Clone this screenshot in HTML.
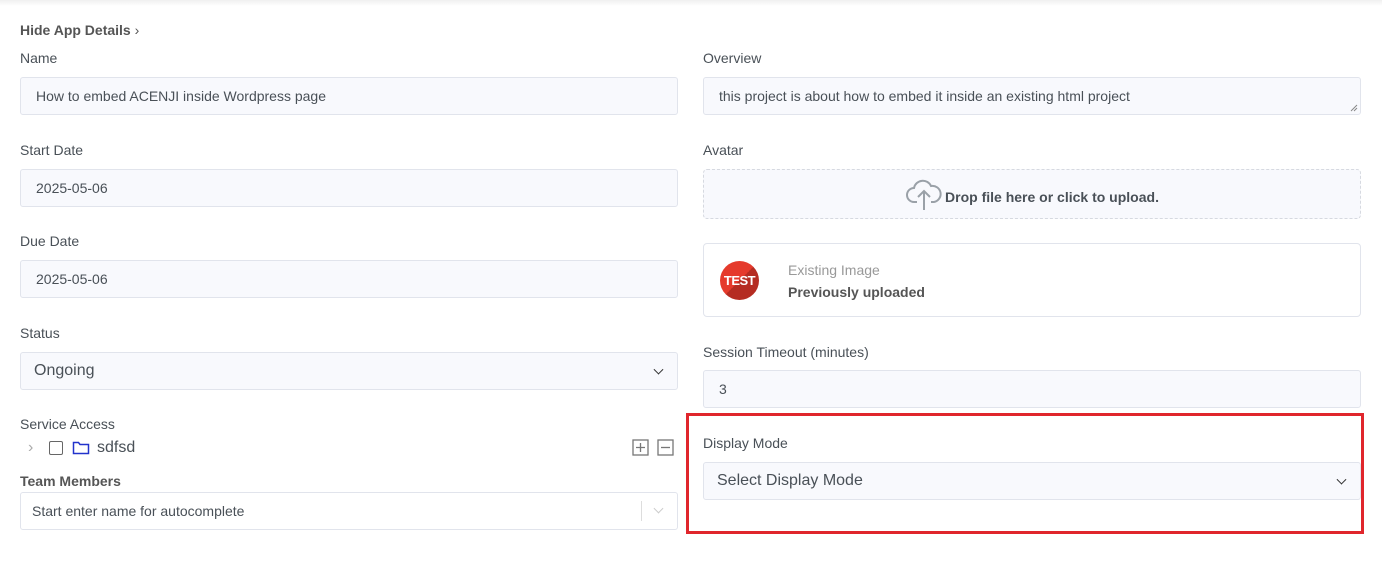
<!DOCTYPE html>
<html><head><style>
*{box-sizing:border-box;margin:0;padding:0}
body{width:1382px;height:562px;background:#fff;font-family:"Liberation Sans",sans-serif;color:#495057;position:relative;overflow:hidden}
.a{position:absolute}
.lbl{font-size:14px;color:#495057;line-height:16px}
.inp{background:#f8f9fd;border:1px solid #e1e4ec;border-radius:3px;font-size:14px;color:#495057;padding-left:15px;display:flex;align-items:center}
.sel{font-size:16px;padding-left:13px}
.chev{position:absolute;right:15px;top:50%;width:7px;height:7px;border-right:1.6px solid #333;border-bottom:1.6px solid #333;transform:translateY(-70%) rotate(45deg)}
</style></head><body>
<div class="a" style="left:0;top:0;width:1382px;height:6px;background:linear-gradient(#f0f0f0,#fff)"></div>
<div class="a lbl" style="left:20px;top:22px;font-weight:bold;color:#555">Hide App Details <span style="font-weight:normal">›</span></div>

<div class="a lbl" style="left:20px;top:50px">Name</div>
<div class="a inp" style="left:20px;top:77px;width:658px;height:38px">How to embed ACENJI inside Wordpress page</div>
<div class="a lbl" style="left:20px;top:142px">Start Date</div>
<div class="a inp" style="left:20px;top:169px;width:658px;height:38px">2025-05-06</div>
<div class="a lbl" style="left:20px;top:233px">Due Date</div>
<div class="a inp" style="left:20px;top:260px;width:658px;height:38px">2025-05-06</div>
<div class="a lbl" style="left:20px;top:325px">Status</div>
<div class="a inp sel" style="left:20px;top:352px;width:658px;height:38px">Ongoing<span class="chev"></span></div>
<div class="a lbl" style="left:20px;top:416px">Service Access</div>
<div class="a" style="left:28px;top:439px;font-size:16px;color:#aaa">›</div>
<div class="a" style="left:49px;top:441px;width:14px;height:14px;border:1.5px solid #666;border-radius:2px"></div>
<svg class="a" style="left:72px;top:440px" width="18" height="16" viewBox="0 0 18 16"><path d="M1.5 2.5h5l1.5 2h8.5v9h-15z" fill="none" stroke="#2233cc" stroke-width="1.5"/></svg>
<div class="a" style="left:97px;top:439px;font-size:16px;color:#495057">sdfsd</div>
<svg class="a" style="left:632px;top:439px" width="44" height="17" viewBox="0 0 44 17"><rect x="1" y="1" width="15" height="15" fill="none" stroke="#777" stroke-width="1.3"/><path d="M4 8.5h9M8.5 4v9" stroke="#777" stroke-width="1.3"/><rect x="26" y="1" width="15" height="15" fill="none" stroke="#777" stroke-width="1.3"/><path d="M29 8.5h9" stroke="#777" stroke-width="1.3"/></svg>
<div class="a lbl" style="left:20px;top:473px;font-weight:bold;color:#555">Team Members</div>
<div class="a inp" style="left:20px;top:492px;width:658px;height:38px;background:#fff;padding-left:11px">Start enter name for autocomplete
<span class="a" style="left:620px;top:8px;width:1px;height:20px;background:#ddd"></span>
<span class="a" style="left:634px;top:12px;width:7px;height:7px;border-right:1.3px solid #ccc;border-bottom:1.3px solid #ccc;transform:rotate(45deg)"></span></div>

<div class="a lbl" style="left:703px;top:50px">Overview</div>
<div class="a inp" style="left:703px;top:77px;width:658px;height:38px">this project is about how to embed it inside an existing html project
<svg class="a" style="right:2px;bottom:2px" width="8" height="8" viewBox="0 0 8 8"><path d="M7 1L1 7M7 4L4 7" stroke="#888" stroke-width="1"/></svg></div>
<div class="a lbl" style="left:703px;top:142px">Avatar</div>
<div class="a" style="left:703px;top:169px;width:658px;height:50px;border:1.5px dashed #d6d9e0;border-radius:4px;background:#f8f9fd;display:flex;align-items:center;justify-content:center;font-size:14px;font-weight:bold;color:#495057;padding-top:6px">
<svg width="38" height="34" viewBox="0 0 38 34" style="margin-right:2px;margin-top:-6px"><path d="M12 25H9a7 7 0 0 1 0-14 9 9 0 0 1 17-2 7 7 0 0 1 3 16h-3" fill="none" stroke="#9aa1a8" stroke-width="2"/><path d="M19 33V15M13 20l6-6 6 6" fill="none" stroke="#9aa1a8" stroke-width="2"/></svg>Drop file here or click to upload.</div>
<div class="a" style="left:703px;top:243px;width:658px;height:74px;border:1px solid #e1e4ec;border-radius:4px;background:#fff"></div>
<div class="a" style="left:720px;top:261px;width:39px;height:39px;border-radius:50%;background:linear-gradient(135deg,#e53a2c 50%,#b52c22 50%);color:#fff;font-weight:bold;font-size:13px;display:flex;align-items:center;justify-content:center;letter-spacing:-0.5px">TEST</div>
<div class="a" style="left:788px;top:262px;font-size:14px;color:#999">Existing Image</div>
<div class="a" style="left:788px;top:284px;font-size:14px;font-weight:bold;color:#555">Previously uploaded</div>
<div class="a lbl" style="left:703px;top:344px">Session Timeout (minutes)</div>
<div class="a inp" style="left:703px;top:370px;width:658px;height:38px">3</div>
<div class="a" style="left:686px;top:413px;width:678px;height:121px;border:3px solid #e0262c"></div>
<div class="a lbl" style="left:703px;top:435px">Display Mode</div>
<div class="a inp sel" style="left:703px;top:462px;width:658px;height:38px">Select Display Mode<span class="chev"></span></div>
</body></html>
